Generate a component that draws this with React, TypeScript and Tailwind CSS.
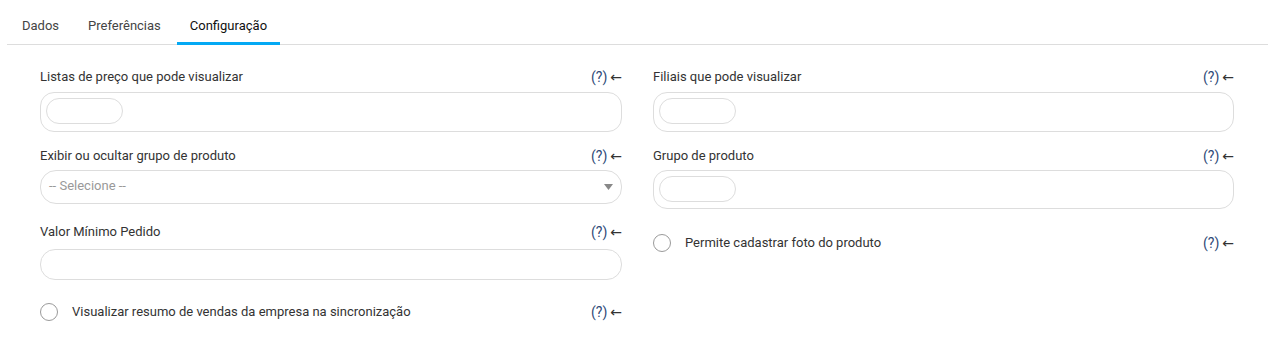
import React from "react";

function Help() {
  return (
    <span className="whitespace-nowrap flex items-center">
      <span className="text-[#2f4a78] text-[14px]">(?)</span>
      <span className="text-[#333] ml-[3px] text-[14px]" style={{ fontFamily: "'DejaVu Sans', sans-serif" }}>
        ←
      </span>
    </span>
  );
}

function Label({ text }: { text: string }) {
  return (
    <div className="flex items-center justify-between h-[20px] text-[13px] text-[#333]">
      <span>{text}</span>
      <Help />
    </div>
  );
}

function TagInput({ h }: { h: number }) {
  return (
    <div
      className="border border-[#dddddd] rounded-[14px] bg-white flex items-start pl-[5px] pt-[5px]"
      style={{ height: h }}
    >
      <div className="w-[77px] h-[26px] rounded-full border border-[#dddddd]" />
    </div>
  );
}

function Radio({ text }: { text: string }) {
  return (
    <div className="flex items-center justify-between h-[20px] text-[13px] text-[#333]">
      <div className="flex items-center">
        <span className="w-[18px] h-[18px] rounded-full border border-[#9a9a9a] bg-white" />
        <span className="ml-[14px]">{text}</span>
      </div>
      <Help />
    </div>
  );
}

export default function App() {
  const tabs = ["Dados", "Preferências", "Configuração"];
  return (
    <div className="w-[1271px] h-[341px] bg-white" style={{ fontFamily: "Roboto, 'Liberation Sans', sans-serif" }}>
      {/* Tabs */}
      <div className="pt-[9px] ml-[7px] mr-[3px] border-b border-[#dddddd] flex gap-[3px] pl-[2px]">
        {tabs.map((t, i) => (
          <div
            key={t}
            className={`h-[36px] px-[13px] flex items-center text-[13px] border-b-[3px] -mb-px ${
              i === 2 ? "border-[#03a9f4] text-[#111]" : "border-transparent text-[#444]"
            }`}
          >
            {t}
          </div>
        ))}
      </div>

      <div className="flex pl-[40px] pr-[37px] gap-[31px] pt-[22px]">
        {/* Left column */}
        <div className="w-[582px] flex flex-col">
          <Label text="Listas de preço que pode visualizar" />
          <div className="mt-[5px]">
            <TagInput h={40} />
          </div>

          <div className="mt-[14px]">
            <Label text="Exibir ou ocultar grupo de produto" />
          </div>
          <div className="mt-[4px] h-[34px] border border-[#dddddd] rounded-[16px] flex items-center justify-between pl-[8px] pr-[8px] text-[13px] text-[#999]">
            <span className="-mt-[3px]">-- Selecione --</span>
            <svg width="9" height="6" viewBox="0 0 9 6">
              <path d="M0 0 H9 L4.5 6 Z" fill="#888" />
            </svg>
          </div>

          <div className="mt-[18px]">
            <Label text="Valor Mínimo Pedido" />
          </div>
          <div className="mt-[7px] h-[31px] border border-[#dddddd] rounded-[15px]" />

          <div className="mt-[22px]">
            <Radio text="Visualizar resumo de vendas da empresa na sincronização" />
          </div>
        </div>

        {/* Right column */}
        <div className="w-[581px] flex flex-col">
          <Label text="Filiais que pode visualizar" />
          <div className="mt-[5px]">
            <TagInput h={40} />
          </div>

          <div className="mt-[14px]">
            <Label text="Grupo de produto" />
          </div>
          <div className="mt-[4px]">
            <TagInput h={39} />
          </div>

          <div className="mt-[24px]">
            <Radio text="Permite cadastrar foto do produto" />
          </div>
        </div>
      </div>
    </div>
  );
}
